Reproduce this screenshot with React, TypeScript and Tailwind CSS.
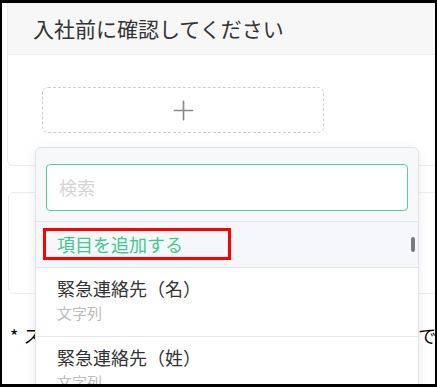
import { Plus } from "lucide-react";

const items = [
  { name: "緊急連絡先（名）", type: "文字列" },
  { name: "緊急連絡先（姓）", type: "文字列" },
];

export default function App() {
  return (
    <div className="w-[437px] h-[387px] overflow-hidden bg-white border-l-2 border-t-[3px] border-r-2 border-b-[3px] border-black font-['Noto_Sans_CJK_JP',sans-serif]">
      <div className="relative h-full">
        {/* page behind the dropdown */}
        <div className="pl-[5px] w-[470px]">
          <div className="bg-white border-l border-b border-[#f1e9eb] rounded-bl-md">
            <div className="h-[52px] bg-[#f7f7f7] border-b border-[#f1e9eb] flex items-center pl-[25px] text-[21px] text-[#333]">
              入社前に確認してください
            </div>
            <div className="pt-[32px] pb-[32px] pl-[34px]">
              <div className="w-[282px] h-[46px] border border-dashed border-[#cfcfcf] rounded-md flex items-center justify-center text-[#8a8a8a]">
                <Plus size={31} strokeWidth={1.3} />
              </div>
            </div>
          </div>

          <div className="mt-[26px] ml-px h-[102px] border border-[#f1e9eb] rounded-md" />

          <div className="mt-[28px] pl-[3px] text-[18px] text-black whitespace-nowrap">
            <span className="mr-[5px]">*</span>スタッフが入社前に確認すべき書類や項目をここで、設定してください。
          </div>
        </div>

        {/* dropdown */}
        <div className="absolute left-[33px] top-[144px] w-[384px] h-[260px] bg-white border border-[#dfe2e8] rounded-t-md shadow-[0_2px_12px_rgba(0,0,0,0.08)]">
          <div className="bg-[#f7f8fa] rounded-t-md px-[10px] pt-[16px] pb-[10px]">
            <div className="h-[47px] bg-white border border-[#4fd19b] rounded flex items-center pl-[12px] text-[18px] text-[#d4d4d4]">
              検索
            </div>
          </div>
          <div className="relative">
            <div className="h-[46px] border-t border-[#e4e7ed] bg-[#f5f7fa] flex items-center pl-[21px] text-[18px] text-[#3ec98e]">
              項目を追加する
            </div>
            {items.map((item) => (
              <div key={item.name} className="h-[69px] border-t border-[#e4e7ed] pl-[21px] pt-[8px]">
                <div className="text-[18px] leading-[24px] text-[#333]">{item.name}</div>
                <div className="mt-[3px] text-[15px] leading-[20px] text-[#bbbbbb]">{item.type}</div>
              </div>
            ))}
            <div className="absolute right-[3px] top-[16px] w-[4px] h-[15px] rounded-sm bg-[#7a7a7a]" />
          </div>
        </div>

        {/* annotation */}
        <div className="absolute left-[41px] top-[225px] w-[188px] h-[32px] border-[3px] border-[#ff0000]" />
      </div>
    </div>
  );
}
